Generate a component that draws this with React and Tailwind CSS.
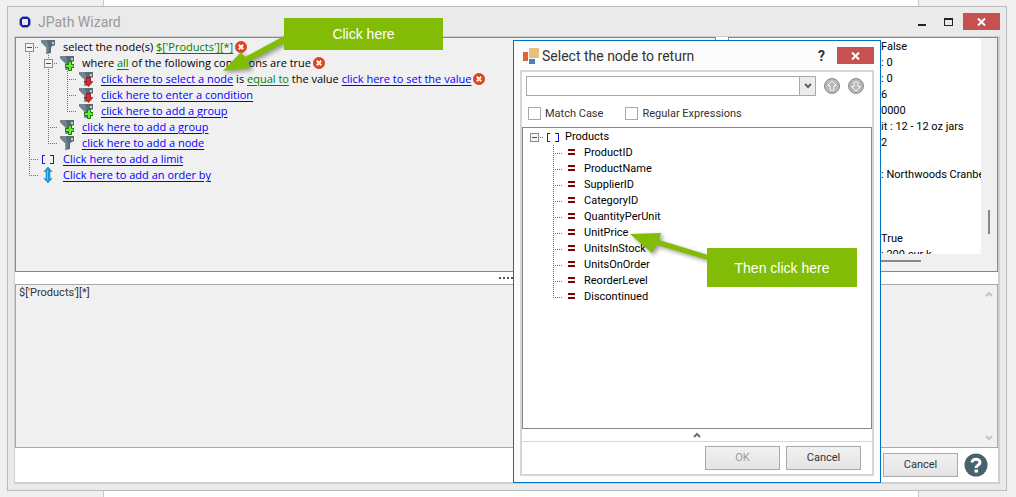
import clsx from 'clsx';

const mainTree = [
  { cells: ['root'], icon: 'filter', parts: [['text', 'select the node(s) '], ['green', "$['Products'][*]"]], remove: true },
  { cells: ['v', 'node'], icon: 'filterAdd', parts: [['text', 'where '], ['green', 'all'], ['text', ' of the following conditions are true']], remove: true },
  {
    cells: ['v', 'v', 't'],
    icon: 'filterDown',
    parts: [
      ['link', 'click here to select a node'],
      ['text', ' is '],
      ['green', 'equal to'],
      ['text', ' the value '],
      ['link', 'click here to set the value'],
    ],
    remove: true,
  },
  { cells: ['v', 'v', 't'], icon: 'filterDown', parts: [['link', 'click here to enter a condition']] },
  { cells: ['v', 'v', 'l'], icon: 'filterAdd', parts: [['link', 'click here to add a group']] },
  { cells: ['v', 't'], icon: 'filterAdd', parts: [['link', 'click here to add a group']] },
  { cells: ['v', 'l'], icon: 'filter', parts: [['link', 'click here to add a node']] },
  { cells: ['t'], icon: 'brackets', parts: [['link', 'Click here to add a limit']] },
  { cells: ['l'], icon: 'updown', parts: [['link', 'Click here to add an order by']] },
];

const fields = [
  'ProductID',
  'ProductName',
  'SupplierID',
  'CategoryID',
  'QuantityPerUnit',
  'UnitPrice',
  'UnitsInStock',
  'UnitsOnOrder',
  'ReorderLevel',
  'Discontinued',
];

const preview = ['False', ': 0', ': 0', '6', '0000', 'it : 12 - 12 oz jars', '2', '', ': Northwoods Cranbe', '', '', '', 'True', ': 200 eur k'];

const Branch = ({ type }) => (
  <svg width="19" height="16" className="shrink-0" fill="none" stroke="#707070" strokeDasharray="1 1" shapeRendering="crispEdges">
    {type === 'v' || type === 't' ? <path d="M9.5 0V16" /> : null}
    {type === 'l' || type === 'node' ? <path d="M9.5 0V8" /> : null}
    {type === 'node' || type === 'root' ? <path d="M9.5 12V16" /> : null}
    {type !== 'v' && type !== 'blank' ? <path d="M9 8.5H19" /> : null}
    {type === 'node' || type === 'root' || type === 'single' ? (
      <g strokeDasharray="none">
        <rect x="5.5" y="4.5" width="8" height="8" fill="#f4f4f4" stroke="#8c8c8c" />
        <path d="M7 8.5H12" stroke="#2b4fa0" />
      </g>
    ) : null}
  </svg>
);

const Icon = ({ name }) => {
  if (name === 'brackets') {
    return (
      <svg width="16" height="16" fill="none" stroke="#1414f0" shapeRendering="crispEdges">
        <path d="M6 4.5H3.5V12.5H6M11 4.5H14.5V12.5H11" />
      </svg>
    );
  }
  if (name === 'equals') {
    return (
      <svg width="16" height="16" fill="#800000" shapeRendering="crispEdges">
        <path d="M5 4H12V6H5zM5 8H12V10H5z" />
      </svg>
    );
  }
  if (name === 'updown') {
    return (
      <svg width="16" height="16">
        <path d="M9 0L13 4.500H11V11.500H13L9 16L5 11.500H7V4.500H5z" fill="#1c9ae0" stroke="#1272b4" strokeWidth=".5" />
        <path d="M8.5 3V13" stroke="#62c4f4" />
      </svg>
    );
  }
  return (
    <svg width="16" height="16">
      <path d="M2 1H16V6.500H14L12 8.500V14L7.500 15V8.500L2 3z" fill="#586c76" />
      <path d="M2 1H8L9.500 8V14.500L7.500 15V8.500L2 3z" fill="#71858e" />
      <circle cx="14" cy="4" r="1" fill="#f2f2f2" />
      {name === 'filterAdd' ? (
        <path d="M10.500 6.500H13.500V9.500H16V12.500H13.500V15.500H10.500V12.500H7.500V9.500H10.500z" fill="#6fe830" stroke="#167a12" />
      ) : null}
      {name === 'filterDown' ? (
        <path d="M9.500 6.500H13.500V10.500H15.800L11.500 15.500L7.200 10.500H9.500z" fill="#e0262c" stroke="#8e1014" strokeWidth=".8" />
      ) : null}
    </svg>
  );
};

const RemoveButton = () => (
  <button type="button" aria-label="Remove" className="ml-0.5 size-3">
    <svg viewBox="0 0 12 12" className="size-3">
      <circle cx="6" cy="6" r="5.700" fill="#e8401c" stroke="#c03010" strokeWidth=".5" />
      <path d="M3.800 3.800L8.200 8.200M8.200 3.800L3.800 8.200" stroke="#fff" strokeWidth="2" />
    </svg>
  </button>
);

const TreeRow = ({ cells, icon, iconClass, children }) => (
  <li className="flex h-4 items-center whitespace-pre">
    {cells.map((type, i) => (
      <Branch key={i} type={type} />
    ))}
    <span className={clsx('shrink-0', iconClass)}>
      <Icon name={icon} />
    </span>
    {children}
  </li>
);

const Part = ({ kind, text }) => {
  if (kind === 'text') return <span>{text}</span>;
  return (
    <a href="#" className={clsx('underline underline-offset-2', kind === 'link' ? 'text-[#0000ff]' : 'text-[#008000]')}>
      {text}
    </a>
  );
};

const CloseButton = () => (
  <button type="button" aria-label="Close" className="flex h-[17px] w-[37px] items-center justify-center bg-[#c75050]">
    <svg width="9" height="8" stroke="#fff" strokeWidth="2">
      <path d="M1 0.500L8 7.500M8 0.500L1 7.500" />
    </svg>
  </button>
);

const Chevron = ({ up, className }) => (
  <svg width="8" height="6" fill="none" strokeWidth="2" className={className}>
    <path d={up ? 'M1 5L4 2L7 5' : 'M1 1L4 4L7 1'} />
  </svg>
);

const RoundArrow = ({ label, up }) => (
  <button type="button" aria-label={label}>
    <svg width="16" height="16" fill="#b8b8b8" stroke="#8a8a8a">
      <circle cx="8" cy="8" r="7.500" />
      <path d={up ? 'M8 3L12.500 7.500H10V12H6V7.500H3.500z' : 'M8 13L12.500 8.500H10V4H6V8.500H3.500z'} fill="#b8b8b8" stroke="#f4f4f4" />
    </svg>
  </button>
);

const PushButton = ({ className, ...props }) => (
  <button
    type="button"
    className={clsx('h-6 w-[75px] border border-[#a9a9a9] bg-linear-to-b from-[#f1f1f1] to-[#e4e4e4] disabled:text-[#9a9a9a]', className)}
    {...props}
  />
);

const NodeDialog = () => (
  <section
    role="dialog"
    aria-label="Select the node to return"
    className="absolute top-10 left-[513px] flex h-[443px] w-[368px] flex-col border border-[#0072c6] bg-[#fcfcfc] px-1.5 pb-1.5"
  >
    <header className="flex h-[29px] shrink-0 items-center pl-0.5">
      <svg width="18" height="18">
        <path d="M7 1H17V11H7z" fill="#e8c07c" />
        <path d="M1 5H6V14H1z" fill="#d9633f" />
        <path d="M7 12H13V17H7z" fill="#4a80bd" />
      </svg>
      <h2 className="ml-0.5 flex-1 text-sm">Select the node to return</h2>
      <button type="button" className="mr-3 text-sm font-bold">
        ?
      </button>
      <CloseButton />
    </header>
    <div className="flex flex-1 flex-col border-2 border-[#d6d6d6] bg-white">
      <div className="flex items-center gap-2 pt-1 pr-2 pl-1">
        <div className="flex h-5 flex-1 border border-[#a9a9a9]">
          <input aria-label="Search" className="min-w-0 flex-1 px-1 outline-none" />
          <button type="button" aria-label="Show list" className="flex w-4 items-center justify-center border-l border-[#a9a9a9] bg-[#ececec]">
            <Chevron className="stroke-[#606060]" />
          </button>
        </div>
        <RoundArrow label="Previous" up />
        <RoundArrow label="Next" />
      </div>
      <div className="flex h-[31px] shrink-0 items-center gap-[22px] px-1.5 pt-1">
        <label className="flex items-center gap-1">
          <input type="checkbox" className="size-[13px] appearance-none border border-[#a9a9a9] bg-white" />
          Match Case
        </label>
        <label className="flex items-center gap-1">
          <input type="checkbox" className="size-[13px] appearance-none border border-[#a9a9a9] bg-white" />
          Regular Expressions
        </label>
      </div>
      <ul className="flex-1 border border-[#828790] pt-px pl-0.5 text-black">
        <TreeRow cells={['single']} icon="brackets" iconClass="w-[21px]">
          Products
        </TreeRow>
        {fields.map((field, i) => (
          <TreeRow key={field} cells={['blank', i === fields.length - 1 ? 'l' : 't']} icon="equals" iconClass="w-[21px]">
            {field}
          </TreeRow>
        ))}
      </ul>
      <button type="button" aria-label="Collapse" className="flex h-3 shrink-0 items-center justify-center">
        <Chevron up className="stroke-[#707070]" />
      </button>
      <footer className="flex h-[33px] shrink-0 items-center justify-end gap-1.5 border-t border-[#d6d6d6] pr-[11px]">
        <PushButton disabled>OK</PushButton>
        <PushButton>Cancel</PushButton>
      </footer>
    </div>
  </section>
);

const App = () => (
  <div className="relative h-screen min-h-[497px] overflow-hidden bg-[#f0f0f0] pt-1.5 pr-[9px] pb-1.5 pl-[7px] font-[Roboto,sans-serif] text-[11px] leading-4 text-[#333]">
    <div className="absolute inset-y-0 right-[97px] left-[103px] border-x border-[#c8c8c8] bg-white" />
    <main className="relative flex h-full flex-col border border-[#bbb] bg-[#eaeaea] px-1.5 pb-1.5">
      <header className="flex h-[29px] shrink-0 items-center pl-1">
        <svg width="14" height="14" fill="none" stroke="#1a1aa8">
          <rect x="3" y="3" width="8" height="8" rx="2" strokeWidth="2" />
          <path d="M4 1.500H10M4 12.500H10M1.500 4V10M12.500 4V10" strokeOpacity=".4" />
        </svg>
        <h1 className="ml-1.5 flex-1 text-sm text-[#999]">JPath Wizard</h1>
        <button type="button" aria-label="Minimize" className="mr-[18px] h-2 w-2 border-b-2 border-[#222]" />
        <button type="button" aria-label="Maximize" className="mr-2.5 h-2 w-[9px] border border-t-2 border-[#222]" />
        <CloseButton />
      </header>
      <div className="flex flex-1 flex-col border border-r-2 border-b-2 border-[#d0d0d0] bg-white">
        <div className="flex h-[235px] shrink-0 gap-3">
          <ul className="flex-1 border border-[#828790] bg-[#f0f0f0] pt-px pl-1 font-['Open_Sans',sans-serif] text-black">
            {mainTree.map((row, i) => (
              <TreeRow key={i} cells={row.cells} icon={row.icon} iconClass="w-6">
                {row.parts.map(([kind, text], j) => (
                  <Part key={j} kind={kind} text={text} />
                ))}
                {row.remove ? <RemoveButton /> : null}
              </TreeRow>
            ))}
          </ul>
          <div className="flex w-[270px] flex-col border border-[#828790] bg-[#f0f0f0] text-black">
            <div className="flex h-[216px]">
              <ul className="min-w-0 flex-1 overflow-hidden bg-white pt-px pl-[152px]">
                {preview.map((line, i) => (
                  <li key={i} className="h-4 whitespace-nowrap">
                    {line}
                  </li>
                ))}
              </ul>
              <div className="flex w-4 flex-col items-center justify-end pb-5">
                <span className="h-6 w-0.5 bg-[#888]" />
              </div>
            </div>
            <div className="mt-1.5 h-0.5 w-[192px] bg-[#888]" />
          </div>
        </div>
        <div className="flex h-3 shrink-0 items-center justify-center text-[#555]">
          <svg width="16" height="2" fill="currentColor" shapeRendering="crispEdges">
            <path d="M0 0H2V2H0zM4 0H6V2H4zM8 0H10V2H8zM12 0H14V2H12z" />
          </svg>
        </div>
        <div className="flex flex-1 border border-[#a9a9a9] bg-[#f1f1f1]">
          <textarea aria-label="JPath" readOnly className="flex-1 resize-none px-[3px] outline-none" defaultValue="$['Products'][*]" />
          <div className="flex w-4 flex-col items-center justify-between py-1.5">
            <Chevron up className="stroke-[#c4c4c4]" />
            <Chevron className="stroke-[#c4c4c4]" />
          </div>
        </div>
        <footer className="flex h-[34px] shrink-0 items-center justify-end gap-1.5 pr-2.5">
          <PushButton>Cancel</PushButton>
          <button type="button" aria-label="Help">
            <svg width="24" height="24">
              <circle cx="12" cy="12" r="11.500" fill="#47616e" />
              <path d="M8 9.500C8 5 16 5 16 9.500C16 12 12.200 11.800 12.200 15" fill="none" stroke="#fff" strokeWidth="3" />
              <rect x="10.500" y="16.500" width="3.500" height="3" fill="#fff" />
            </svg>
          </button>
        </footer>
      </div>
    </main>

    <NodeDialog />

    <svg width="80" height="64" className="absolute top-6 left-[216px] drop-shadow-[2px_2px_2px_rgba(0,0,0,0.4)]" fill="#82bc06">
      <path d="M7 47L25 28L29 33L68 12V19L32 38L35 44z" />
    </svg>
    <div className="absolute top-[18px] left-[284px] flex h-8 w-[159px] items-center justify-center bg-[#82bc06] font-['Liberation_Sans',sans-serif] text-sm text-white">
      Click here
    </div>
    <svg width="90" height="50" className="absolute top-[226px] left-[626px] drop-shadow-[2px_2px_2px_rgba(0,0,0,0.4)]" fill="#82bc06">
      <path d="M4 8L35 7L33 14L82 29V34L31 19L26 27z" />
    </svg>
    <div className="absolute top-[248px] left-[707px] flex h-[39px] w-[150px] items-center justify-center bg-[#82bc06] font-['Liberation_Sans',sans-serif] text-sm text-white">
      Then click here
    </div>
  </div>
);

export default App;
